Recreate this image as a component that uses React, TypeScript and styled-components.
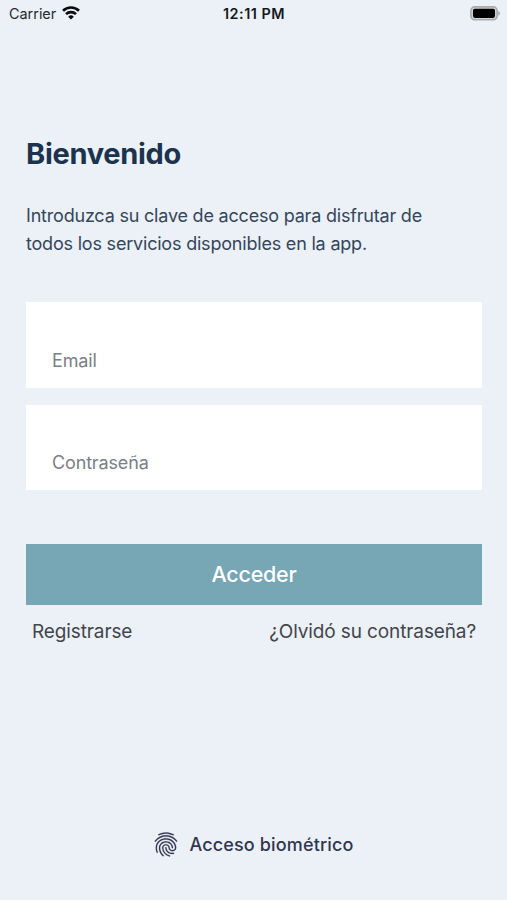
import React from "react";
import styled, { createGlobalStyle } from "styled-components";
import { MdFingerprint } from "react-icons/md";

const GlobalStyle = createGlobalStyle`
  * { box-sizing: border-box; }
  body { margin: 0; background: #ecf0f7; font-family: Inter, "Liberation Sans", sans-serif; }
  button, input { font: inherit; border: 0; padding: 0; margin: 0; background: none; border-radius: 0; }
`;

const Screen = styled.div`
  width: 507px;
  height: 900px;
  display: flex;
  flex-direction: column;
  overflow: hidden;
  background: #ecf0f7;
`;

const StatusBar = styled.header`
  height: 27px;
  flex: none;
  padding: 0 6px 0 9px;
  display: grid;
  grid-template-columns: 1fr auto 1fr;
  align-items: center;
  color: #252a30;
  font-size: 14.4px;
`;

const Carrier = styled.div`
  display: flex;
  align-items: center;
  gap: 6px;
`;

const WifiIcon = styled.svg`
  margin-bottom: 1px;
`;

const Clock = styled.time`
  font-weight: 600;
  font-size: 14.4px;
  letter-spacing: 0.5px;
  margin-right: 2px;
  color: #15181c;
`;

const Battery = styled.svg`
  justify-self: end;
  display: block;
`;

const Content = styled.main`
  flex: 1;
  padding: 107px 25px 0 26px;
  display: flex;
  flex-direction: column;
`;

const Title = styled.h1`
  margin: 0;
  font-size: 29px;
  line-height: 40px;
  font-weight: 700;
  letter-spacing: -0.3px;
  color: #1b334d;
`;

const Intro = styled.p`
  margin: 28px 0 0;
  font-size: 18px;
  line-height: 28px;
  letter-spacing: -0.2px;
  color: #35465a;
  white-space: nowrap;
`;

const Fields = styled.div`
  margin-top: 44px;
  display: grid;
  gap: 17px;
`;

const Field = styled.input`
  width: 100%;
  height: 85.5px;
  padding: 31px 26px 0;
  background: #fff;
  font-size: 18px;
  letter-spacing: -0.15px;
  outline: none;
  &::placeholder { color: #7b8088; opacity: 1; }
`;

const Submit = styled.button`
  flex: none;
  height: 61px;
  margin-top: 54px;
  padding-bottom: 2px;
  background: #77a6b4;
  color: #fff;
  font-size: 21.5px;
  letter-spacing: -0.25px;
  font-weight: 500;
`;

const Links = styled.nav`
  display: flex;
  justify-content: space-between;
  padding: 13px 6px 0;
`;

const LinkButton = styled.button`
  font-size: 19px;
  line-height: 28px;
  letter-spacing: -0.12px;
  color: #42464c;
`;

const Biometric = styled.button`
  align-self: center;
  margin: 0 2px 40px 0;
  display: flex;
  align-items: center;
  gap: 8px;
  font-size: 18px;
  line-height: 30px;
  letter-spacing: 0.15px;
  font-weight: 500;
  color: #30364f;
`;

const FingerprintIcon = styled(MdFingerprint).attrs({ preserveAspectRatio: "none" })`
  width: 30px;
  height: 29px;
  margin: 0 0 1px;
  stroke: currentColor;
  stroke-width: 0.15px;
  path[fill="none"] { stroke: none; }
`;

export default function App() {
  return (
    <>
      <GlobalStyle />
      <Screen>
        <StatusBar>
          <Carrier>
            <span>Carrier</span>
            <WifiIcon width="18" height="14" viewBox="0 0 18 14" fill="none" stroke="#090b0d" strokeWidth="2.7">
              <path d="M1 4.7a11.6 11.6 0 0 1 16 0" />
              <path d="M4 8.1a7.2 7.2 0 0 1 10 0" />
              <path d="M9 13.5 6.2 10.7a4 4 0 0 1 5.6 0Z" fill="#090b0d" stroke="none" />
            </WifiIcon>
          </Carrier>
          <Clock>12:11 PM</Clock>
          <Battery width="31" height="15" viewBox="0 0 31 15">
            <rect x="0.9" y="0.9" width="26.2" height="12.8" rx="3.8" fill="#d0d1d4" stroke="#a9abaf" strokeWidth="1.6" />
            <rect x="3" y="2.7" width="22" height="9.2" rx="1.8" fill="#000" />
            <path d="M28.2 5c2.4.8 2.4 3.8 0 4.6Z" fill="#a9abaf" />
          </Battery>
        </StatusBar>
        <Content>
          <Title>Bienvenido</Title>
          <Intro>
            Introduzca su clave de acceso para disfrutar de
            <br />
            todos los servicios disponibles en la app.
          </Intro>
          <Fields>
            <Field type="email" placeholder="Email" aria-label="Email" />
            <Field type="password" placeholder="Contraseña" aria-label="Contraseña" />
          </Fields>
          <Submit>Acceder</Submit>
          <Links>
            <LinkButton>Registrarse</LinkButton>
            <LinkButton>¿Olvidó su contraseña?</LinkButton>
          </Links>
        </Content>
        <Biometric>
          <FingerprintIcon />
          <span>Acceso biométrico</span>
        </Biometric>
      </Screen>
    </>
  );
}
